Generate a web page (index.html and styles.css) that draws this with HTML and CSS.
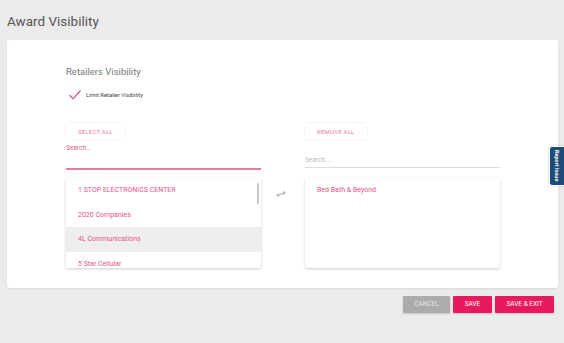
FILE: index.html
```html
<!DOCTYPE html>
<html lang="en">
<head>
  <meta charset="UTF-8">
  <meta name="viewport" content="width=device-width, initial-scale=1.0">
  <title>Award Visibility</title>
  <link rel="stylesheet" href="styles.css">
</head>
<body>
  <h1 class="page-title">Award Visibility</h1>

  <div class="card">
    <h2 class="section-title">Retailers Visibility</h2>

    <label class="check-row">
      <svg class="check-icon" width="12" height="10" viewBox="0 0 12 10">
        <path d="M0.5 5.2 L4 8.8 L11.5 0.6" fill="none" stroke="#d6336c" stroke-width="1.1"/>
      </svg>
      <span>Limit Retailer Visibility</span>
    </label>

    <div class="picker">
      <div class="picker-col">
        <div class="flat-button">SELECT ALL</div>
        <div class="search-field active">
          <span class="search-label">Search...</span>
        </div>
        <div class="list-box">
          <div class="list-item">1 STOP ELECTRONICS CENTER</div>
          <div class="list-item">2020 Companies</div>
          <div class="list-item hovered">4L Communications</div>
          <div class="list-item">5 Star Cellular</div>
          <div class="scroll-thumb"></div>
        </div>
      </div>

      <div class="picker-mid">
        <svg class="swap-icon" width="10" height="6" viewBox="0 0 10 6">
          <path d="M1 4.4 L9 1.8" stroke="#a0a0a0" stroke-width="0.9" fill="none"/>
          <path d="M2.6 2.6 L0.8 4.5 L3.2 5.4" stroke="#a0a0a0" stroke-width="0.9" fill="none"/>
          <path d="M6.8 0.6 L9.2 1.7 L7.4 3.6" stroke="#a0a0a0" stroke-width="0.9" fill="none"/>
        </svg>
      </div>

      <div class="picker-col">
        <div class="flat-button">REMOVE ALL</div>
        <div class="search-field">
          <span class="search-placeholder">Search...</span>
        </div>
        <div class="list-box">
          <div class="list-item">Bed Bath &amp; Beyond</div>
        </div>
      </div>
    </div>
  </div>

  <div class="actions">
    <div class="btn btn-cancel">CANCEL</div>
    <div class="btn btn-primary">SAVE</div>
    <div class="btn btn-primary btn-wide">SAVE &amp; EXIT</div>
  </div>

  <div class="report-tab"><span>Report Issue</span></div>
</body>
</html>
```

FILE: styles.css
```css
body {
  font-family: Roboto, "Liberation Sans", Arial, sans-serif;
  background-color: #ebebeb;
  margin: 0;
  padding: 0 6px 0 7px;
  height: 343px;
  overflow: hidden;
  position: relative;
}

.page-title {
  font-size: 13.5px;
  font-weight: 400;
  color: #555;
  margin: 0;
  padding-top: 11px;
  height: 40px;
  line-height: 20px;
  box-sizing: border-box;
}

.card {
  background: #fff;
  border-radius: 3px;
  box-shadow: 0 1px 2px rgba(0, 0, 0, 0.08);
  height: 248px;
  padding: 25px 0 0 59px;
  box-sizing: border-box;
}

.section-title {
  font-size: 9.5px;
  font-weight: 400;
  color: #777;
  margin: 0;
  line-height: 14px;
}

.check-row {
  display: flex;
  align-items: center;
  margin-top: 11px;
  height: 10px;
  font-size: 5.8px;
  color: #444;
}

.check-icon {
  margin: 0 5px 0 3px;
}

.picker {
  display: grid;
  grid-template-columns: 195px 44px 195px;
  margin-top: 23px;
}

.picker-col {
  display: flex;
  flex-direction: column;
  align-items: flex-start;
}

.flat-button {
  height: 17px;
  padding: 0 12px;
  line-height: 17px;
  font-size: 6px;
  letter-spacing: 0.2px;
  color: #f07aa3;
  background: #fff;
  border-radius: 2px;
  box-shadow: 0 0 2px rgba(0, 0, 0, 0.12);
}

.search-field {
  align-self: stretch;
  height: 27px;
  border-bottom: 1px solid #ddd;
  position: relative;
}

.search-field.active {
  border-bottom: 2px solid #e2799f;
  height: 28px;
}

.search-label {
  position: absolute;
  left: 0;
  top: 4px;
  font-size: 6.5px;
  color: #e2608e;
}

.search-placeholder {
  position: absolute;
  left: 0;
  top: 16px;
  font-size: 6.5px;
  color: #bbb;
}

.list-box {
  align-self: stretch;
  margin-top: 10px;
  height: 90px;
  overflow: hidden;
  background: #fff;
  border-radius: 2px;
  box-shadow: 0 1px 3px rgba(0, 0, 0, 0.2);
  position: relative;
}

.search-field.active + .list-box {
  margin-top: 8px;
}

.list-item {
  height: 24.5px;
  line-height: 24.5px;
  padding-left: 12px;
  font-size: 7px;
  color: #e4528a;
}

.list-item.hovered {
  background: #eeeeee;
}

.scroll-thumb {
  position: absolute;
  right: 2px;
  top: 5px;
  width: 2px;
  height: 21px;
  background: #c4c4c4;
  border-radius: 1px;
}

.picker-mid {
  display: flex;
  justify-content: center;
  padding-top: 68px;
}

.swap-icon {
  margin-left: -4px;
}

.actions {
  display: flex;
  justify-content: flex-end;
  gap: 3px;
  margin-top: 8px;
  padding-right: 4px;
}

.btn {
  height: 17px;
  line-height: 17px;
  text-align: center;
  font-size: 6.5px;
  color: #fff;
  border-radius: 1px;
  box-shadow: 0 1px 2px rgba(0, 0, 0, 0.15);
}

.btn-cancel {
  width: 47px;
  background: #acacac;
  color: #e4e4e4;
}

.btn-primary {
  width: 39px;
  background: #e8195f;
}

.btn-wide {
  width: 59px;
}

.report-tab {
  position: absolute;
  right: 0;
  top: 146px;
  width: 15px;
  height: 40px;
  background: #1e4c7a;
  border: 1px solid #fff;
  border-right: none;
  border-radius: 3px 0 0 3px;
  box-sizing: border-box;
  box-shadow: 0 0 2px rgba(0, 0, 0, 0.3);
  display: flex;
  align-items: center;
  justify-content: center;
}

.report-tab span {
  writing-mode: vertical-rl;
  font-size: 5.5px;
  font-weight: 700;
  color: #fff;
  white-space: nowrap;
}
```
